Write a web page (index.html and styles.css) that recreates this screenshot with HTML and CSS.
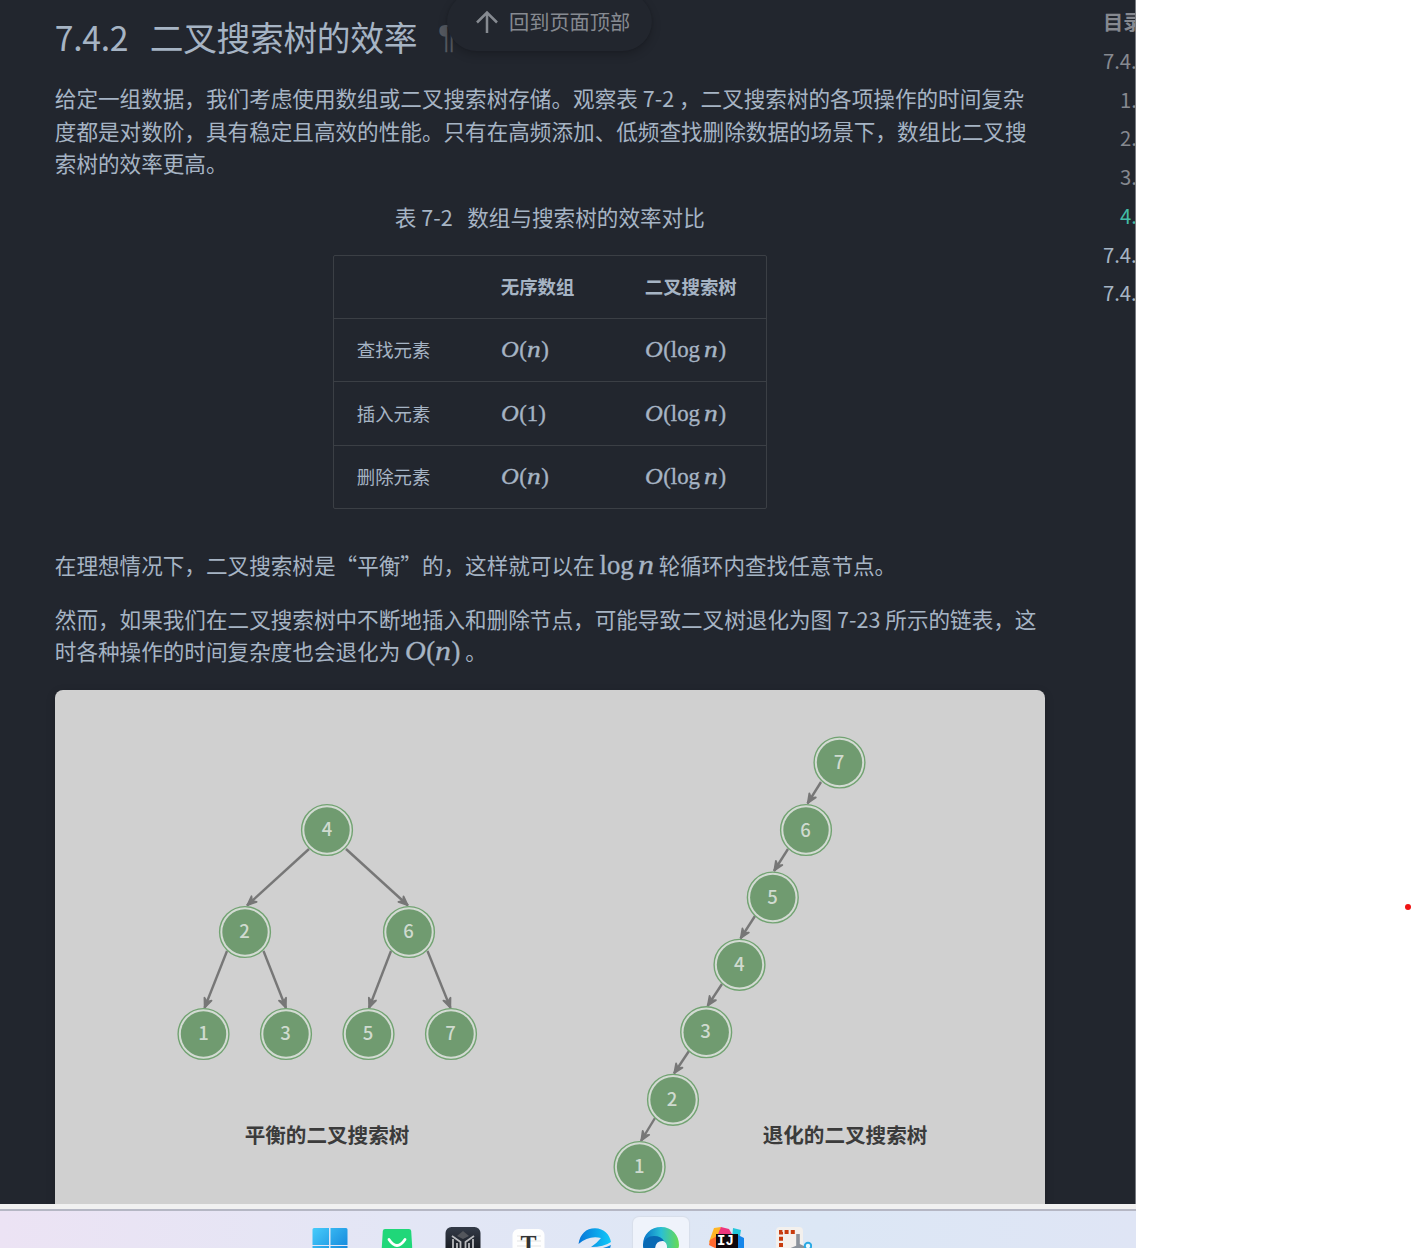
FILE: index.html
```html
<!DOCTYPE html>
<html lang="zh-CN">
<head>
<meta charset="utf-8">
<title>二叉搜索树的效率</title>
<link rel="stylesheet" href="styles.css">
</head>
<body>
<div class="desktop">
<main class="page">
<article class="content">
<h3 class="heading"><span class="number">7.4.2</span><span>二叉搜索树的效率</span><span class="pilcrow">¶</span></h3>
<p class="para">给定一组数据，我们考虑使用数组或二叉搜索树存储。观察表 7-2 ，二叉搜索树的各项操作的时间复杂<br>度都是对数阶，具有稳定且高效的性能。只有在高频添加、低频查找删除数据的场景下，数组比二叉搜<br>索树的效率更高。</p>
<p class="para caption">表 7-2 &nbsp; 数组与搜索树的效率对比</p>
<table class="table">
<thead><tr><th></th><th>无序数组</th><th>二叉搜索树</th></tr></thead>
<tbody>
<tr><td>查找元素</td><td><span class="math"><i class="big-o">O</i>(<i>n</i>)</span></td><td><span class="math"><i class="big-o">O</i>(<span class="log">log</span><i>n</i>)</span></td></tr>
<tr class="tall"><td>插入元素</td><td><span class="math"><i class="big-o">O</i>(1)</span></td><td><span class="math"><i class="big-o">O</i>(<span class="log">log</span><i>n</i>)</span></td></tr>
<tr><td>删除元素</td><td><span class="math"><i class="big-o">O</i>(<i>n</i>)</span></td><td><span class="math"><i class="big-o">O</i>(<span class="log">log</span><i>n</i>)</span></td></tr>
</tbody>
</table>
<p class="para">在理想情况下，二叉搜索树是<span class="quote">“</span>平衡<span class="quote-end">”</span>的，这样就可以在 <span class="math inline"><span class="log">log</span><i>n</i></span> 轮循环内查找任意节点。</p>
<p class="para last">然而，如果我们在二叉搜索树中不断地插入和删除节点，可能导致二叉树退化为图 7-23 所示的链表，这<br>时各种操作的时间复杂度也会退化为 <span class="math inline"><i class="big-o">O</i>(<i>n</i>)</span> 。</p>
<figure class="figure">
<svg class="diagram" viewBox="55 690 990 514" width="990" height="514">
<defs>
<marker id="arrow" markerUnits="userSpaceOnUse" markerWidth="14" markerHeight="14" refX="11.5" refY="6" orient="auto"><path d="M2 2.200 11 6 2 9.800 4.800 6Z" fill="#777" stroke="#777" stroke-width="1.800" stroke-linejoin="round"/></marker>
<g id="node"><circle r="25.4" fill="#d3dbd3" stroke="#72a372" stroke-width="1.4"/><circle r="22.7" fill="#709b70"/></g>
</defs>
<g class="edges">
<path d="M309 849 247 905.500" marker-end="url(#arrow)"/><path d="M346 849 408 905.500" marker-end="url(#arrow)"/>
<path d="M227 951 204.500 1008" marker-end="url(#arrow)"/><path d="M263.500 951 286 1008" marker-end="url(#arrow)"/>
<path d="M391 951 369 1008" marker-end="url(#arrow)"/><path d="M427.500 951 450.500 1008" marker-end="url(#arrow)"/>
<path d="M821 782 807.500 803.500" marker-end="url(#arrow)"/><path d="M788 849 774 871" marker-end="url(#arrow)"/>
<path d="M755 916 740.500 938.500" marker-end="url(#arrow)"/><path d="M722 984 707.500 1006" marker-end="url(#arrow)"/>
<path d="M689 1051 674 1073.500" marker-end="url(#arrow)"/><path d="M655 1118 641 1141" marker-end="url(#arrow)"/>
</g>
<g class="nodes">
<use href="#node" x="327" y="830"/><text x="327" y="836">4</text>
<use href="#node" x="245" y="932"/><text x="244.500" y="938">2</text>
<use href="#node" x="409" y="932"/><text x="408.500" y="938">6</text>
<use href="#node" x="203.500" y="1034"/><text x="203.500" y="1040">1</text>
<use href="#node" x="286" y="1034"/><text x="285.500" y="1040">3</text>
<use href="#node" x="368.500" y="1034"/><text x="368" y="1040">5</text>
<use href="#node" x="451" y="1034"/><text x="450.500" y="1040">7</text>
<use href="#node" x="839.500" y="762.500"/><text x="839" y="769">7</text>
<use href="#node" x="806" y="830"/><text x="805.500" y="836.500">6</text>
<use href="#node" x="772.800" y="897.500"/><text x="772.500" y="904">5</text>
<use href="#node" x="739.500" y="964.800"/><text x="739.300" y="971">4</text>
<use href="#node" x="706.200" y="1032.200"/><text x="705.500" y="1038">3</text>
<use href="#node" x="673" y="1099.800"/><text x="672" y="1105.500">2</text>
<use href="#node" x="639.600" y="1167"/><text x="639.300" y="1173">1</text>
</g>
<g class="labels"><text x="327" y="1143">平衡的二叉搜索树</text><text x="845" y="1143">退化的二叉搜索树</text></g>
</svg>
</figure>
</article>
<nav class="toc">
<b class="passed">目录</b>
<span class="passed">7.4.</span><span class="passed sub">1.</span><span class="passed sub">2.</span><span class="passed sub">3.</span><span class="active sub">4.</span><span>7.4.</span><span>7.4.</span>
</nav>
<div class="to-top"><svg width="24" height="24" viewBox="0 0 24 24"><path d="M12 23V2.500M2 12.500 12 2.500 22 12.500" fill="none" stroke="currentColor" stroke-width="2.500"/></svg>回到页面顶部</div>
</main>
<footer class="taskbar">
<svg class="app" viewBox="0 0 36 36"><defs><linearGradient id="win" x2="1" y2="1"><stop stop-color="#47ccfb"/><stop offset="1" stop-color="#0877d4"/></linearGradient></defs><path d="M.5 2.500q0-1.500 1.500-1.500H17v17H.5ZM18.500 1h15.500q1.500 0 1.500 1.500V18h-17ZM.5 19H17v16H.5ZM18.500 19h17v16h-17Z" fill="url(#win)"/></svg>
<svg class="app" viewBox="0 0 36 36"><path d="M6 2H30q2 0 2.200 2L34 34H2L3.800 4Q4 2 6 2Z" fill="#20d779"/><path d="M10 12.500q8 12 16 0" fill="none" stroke="#fff" stroke-width="2.800" stroke-linecap="round"/></svg>
<svg class="app" viewBox="0 0 36 36"><defs><linearGradient id="dark" x2="0" y2="1"><stop stop-color="#343b48"/><stop offset="1" stop-color="#080a0d"/></linearGradient></defs><rect x=".5" width="35" height="36" rx="6" fill="url(#dark)"/><path d="M12 9 18 4 24 9 18 12Z" fill="#53565c"/><path d="M7 9 15.500 15V30M29 9 20.500 15V30M8 12V27M28 12V27M12 16v12M24 16v12" fill="none" stroke="#b7b8bc" stroke-width="1.800"/></svg>
<svg class="app" viewBox="0 0 36 36"><rect x="1.500" y="2" width="32" height="34" rx="6" fill="#fefefe"/><path d="M6 9h24M6 14h24M6 19h24" stroke="#e4e4e4"/><text x="17.500" y="24" class="typora">T</text></svg>
<svg class="app" viewBox="0 0 36 36"><defs><linearGradient id="blue" x2="1"><stop stop-color="#0875d7"/><stop offset="1" stop-color="#10cafa"/></linearGradient></defs><path d="M1.500 17C3 7 9 1.200 18 1.200 27 1.200 33 8 34 15Q27 20 14 20 20 16 24 11 12 8 1.500 17Z" fill="url(#blue)"/><path d="M10 22q11 2 24-4-4 17-22 14Z" fill="#1489df"/></svg>
<span class="selected"><svg class="app" viewBox="0 0 36 36"><defs><linearGradient id="edge" x2="1"><stop stop-color="#0873c9"/><stop offset=".5" stop-color="#2abfd5"/><stop offset="1" stop-color="#68db52"/></linearGradient></defs><path d="M0 18C0 7 8 0 18 0 29 0 36 8 36 18 36 24 30 27 23 24 26 18 22 13 17 14 9 15 10 27 17 34 8 34 0 27 0 18Z" fill="url(#edge)"/><path d="M0 18Q2 9 11 9 18 9 21 14 12 13 12 23 12 31 18 35 4 35 0 18Z" fill="#0969b4"/></svg></span>
<svg class="app" viewBox="0 0 36 36"><path d="M5 1 12 0 8 20 0 15Z" fill="#ffb526"/><path d="M12 0 20 2 24 9 9 22 7 12Z" fill="#ee347c"/><path d="M1 13 8 9v13L0 18Z" fill="#ff6830"/><path d="m24 1 8 2-1 6-8 4Z" fill="#23c6db"/><path d="m29 8 6 3v18l-8 7V9Z" fill="#1686ea"/><path d="M7 7h22v22H7Z" fill="#10070c"/><text x="8" y="18" class="idea">IJ</text></svg>
<svg class="app" viewBox="0 0 36 36"><rect x="0" y="0" width="27" height="36" rx="4" fill="#f3f0ed"/><path d="M5 20V5H21" fill="none" stroke="#c83b0d" stroke-width="4" stroke-dasharray="4 2.200"/><path d="M22 7v13L12 24M22 18 30 22" fill="none" stroke="#8b929b" stroke-width="3.600"/><circle cx="32" cy="19" r="3.200" fill="#e8f8ff" stroke="#29a9e4" stroke-width="2"/></svg>
</footer>
</div>
<i class="pointer"></i>
</body>
</html>
```
FILE: styles.css
```css
* { box-sizing: border-box; }
body { margin: 0; width: 1412px; height: 1248px; overflow: hidden; background: #fff; position: relative; font-family: "Noto Sans CJK SC", sans-serif; }
.desktop { width: 1136px; height: 1248px; overflow: hidden; }
.page { position: relative; display: flex; height: 1204px; overflow: hidden; background: #22262e; color: #a6b4c4; border-right: 1px solid #777a80; }
.content { width: 990px; margin-left: 54.8px; flex: none; font-size: 21.6px; }
.heading { display: flex; margin: 13px 0 22.3px; height: 47px; line-height: 47px; font-size: 33.75px; font-weight: 400; letter-spacing: -.3375px; }
.heading .number { width: 95px; }
.pilcrow { margin-left: 21px; color: #54585f; font-family: "Liberation Sans", sans-serif; }
.para { margin: 0 0 21.6px; line-height: 32.4px; white-space: nowrap; }
.para.last { margin-bottom: 22.2px; }
.caption { text-align: center; }
.quote { display: inline-block; width: 21.6px; text-align: right; }
.quote-end { display: inline-block; width: 21.6px; }
.table { width: 434px; height: 254px; margin: -.3px auto 40.2px; border: 1px solid #3b3f45; border-radius: 2px; border-spacing: 0; table-layout: fixed; font-size: 18.4px; }
.table th, .table td { height: 63px; padding: 0 23px 1px; text-align: left; line-height: 28px; white-space: nowrap; }
.table th { height: 62px; }
.table .tall td { height: 64px; }
.table th:first-child { width: 144px; }
.table th:nth-child(2) { width: 144px; }
.table td { border-top: 1px solid #3b3f45; }
.math { display: inline-flex; align-items: baseline; font-family: "Liberation Serif", serif; font-size: 22.8px; line-height: 1; -webkit-text-stroke: .35px currentColor; }
.math i { display: inline-block; transform: scaleX(1.2); transform-origin: left; padding-right: 3px; }
.math .big-o { transform: scaleX(1.08); padding-right: 2px; }
.log { padding-right: 4px; }
.inline { font-size: 26.6px; }
.figure { width: 990px; height: 514px; margin: 0; overflow: hidden; border-radius: 8px 8px 0 0; background: #d0d0d0; box-shadow: 0 3px 10px #0003; }
.diagram { display: block; }
.edges { fill: none; stroke: #777; stroke-width: 2.4; }
.nodes text { fill: #cfdacf; font-size: 18.5px; font-weight: 500; text-anchor: middle; }
.labels text { fill: #3b3b3b; font-size: 20.6px; font-weight: 700; text-anchor: middle; }
.toc { display: flex; flex-direction: column; margin-left: 58.2px; padding-top: 3px; font-size: 20.25px; line-height: 38.75px; white-space: nowrap; }
.toc .passed { color: #868990; }
.toc .active { color: #42bba6; }
.toc .sub { padding-left: 17px; }
.to-top { position: absolute; left: 447px; top: -8px; width: 205px; height: 59px; border-radius: 30px; display: flex; align-items: center; padding-left: 28px; gap: 10px; background: #22262e; color: #868a91; font-size: 20.2px; white-space: nowrap; box-shadow: 0 4px 10px #0003, 0 0 2px #0002; }
.taskbar { height: 44px; display: flex; justify-content: center; gap: 30.2px; padding: 18px 12px 0 0; border-top: 5px solid #f1f1f1; background: linear-gradient(#b5b7c4 0 2px, transparent 2px), linear-gradient(90deg, #ece3f4, #e3e6f5 35%, #dce7f5 72%, #dfe5f5); overflow: hidden; }
.app { width: 36px; height: 36px; flex: none; display: block; }
.selected { width: 56px; height: 56px; margin: -10px; padding: 10px; border-radius: 6px; background: #eff3fb; box-shadow: 0 0 1px 1px #d8deea; flex: none; }
.typora { font: 700 24px "Liberation Serif", serif; fill: #333; text-anchor: middle; }
.idea { font: 700 14px "Liberation Mono", monospace; fill: #fff; }
.pointer { position: absolute; left: 1405px; top: 904px; width: 6px; height: 6px; border-radius: 50%; background: #f01414; }
```
